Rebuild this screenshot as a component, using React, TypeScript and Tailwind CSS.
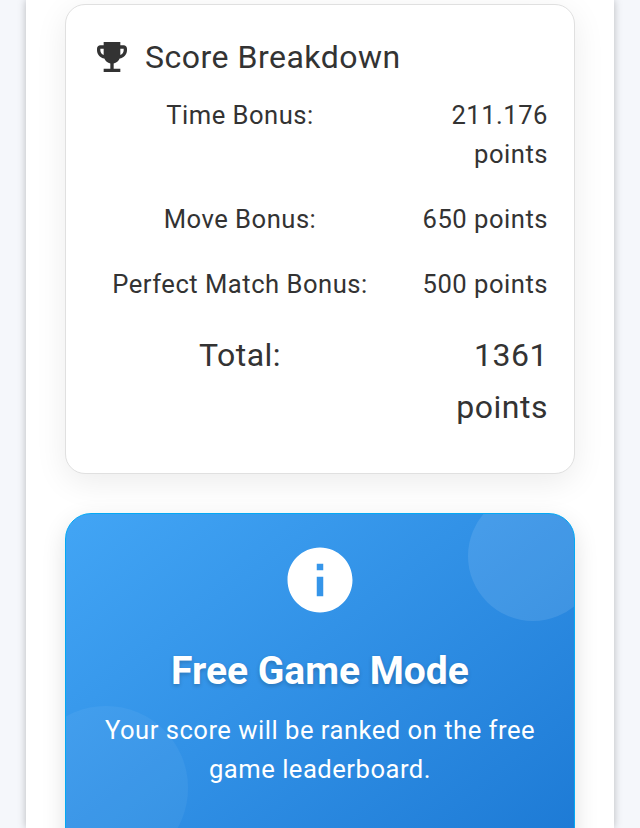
import React from 'react';

const rows = [
  { label: 'Time Bonus:', value: '211.176 points' },
  { label: 'Move Bonus:', value: '650 points' },
  { label: 'Perfect Match Bonus:', value: '500 points' },
];

export default function App() {
  return (
    <div className="h-[828px] overflow-hidden bg-[#f5f7fb] px-[26px] font-['Roboto',sans-serif]">
      <div className="h-full bg-white px-[39px] pt-[4px] shadow-[0_0_8px_rgba(0,0,0,0.25)]">
        {/* Score card */}
        <div className="h-[470px] rounded-[20px] border border-[#e0e0e0] bg-white pl-[26px] pr-[26px] pt-[32px] text-[#333] shadow-[0_8px_32px_rgba(0,0,0,0.08)]">
          <div className="flex items-center gap-[13px]">
            <svg viewBox="0 0 24 24" className="h-[40px] w-[40px] fill-current">
              <path d="M19 5h-2V3H7v2H5c-1.1 0-2 .9-2 2v1c0 2.55 1.92 4.63 4.39 4.94.63 1.5 1.98 2.63 3.61 2.96V19H7v2h10v-2h-4v-3.1c1.63-.33 2.98-1.46 3.61-2.96C19.08 12.63 21 10.55 21 8V7c0-1.1-.9-2-2-2zM5 8V7h2v3.82C5.84 10.4 5 9.3 5 8zm14 0c0 1.3-.84 2.4-2 2.82V7h2v1z" />
            </svg>
            <h3 className="text-[32px] leading-[40px] tracking-[0.5px]">Score Breakdown</h3>
          </div>
          <div className="mt-[19px]">
            {rows.map((row) => (
              <div key={row.label} className="mb-[26px] flex text-[25.6px] leading-[39px] tracking-[0.5px]">
                <span className="w-[296px] text-center">{row.label}</span>
                <span className="flex-1 pl-[30px] text-right">{row.value}</span>
              </div>
            ))}
            <div className="mt-[-1px] flex text-[32px] leading-[52px] tracking-[0.5px]">
              <span className="w-[296px] text-center">Total:</span>
              <span className="flex-1 pl-[30px] text-right">1361 points</span>
            </div>
          </div>
        </div>

        {/* Free game notice */}
        <div className="relative mt-[39px] h-[400px] overflow-hidden rounded-[26px] border border-[#03a9f4] bg-gradient-to-br from-[#42a5f5] to-[#1976d2] px-[30px] pt-[27px] text-center text-white shadow-[0_8px_24px_rgba(0,0,0,0.12)]">
          <div className="absolute right-[-24px] top-[-23px] h-[130px] w-[130px] rounded-full bg-white/10" />
          <div className="absolute left-[-42px] top-[192px] h-[164px] w-[164px] rounded-full bg-white/5" />
          <div className="relative">
            <svg viewBox="0 0 24 24" className="mx-auto h-[78px] w-[78px] fill-white">
              <path d="M12 2C6.48 2 2 6.48 2 12s4.48 10 10 10 10-4.48 10-10S17.52 2 12 2zm1 15h-2v-6h2v6zm0-8h-2V7h2v2z" />
            </svg>
            <h2 className="mt-[26px] text-[39px] font-bold leading-[52px] [text-shadow:0_2px_4px_rgba(0,0,0,0.2)]">Free Game Mode</h2>
            <p className="mt-[14px] text-[25.6px] leading-[39px] tracking-[0.5px]">Your score will be ranked on the free game leaderboard.</p>
          </div>
        </div>
      </div>
    </div>
  );
}
